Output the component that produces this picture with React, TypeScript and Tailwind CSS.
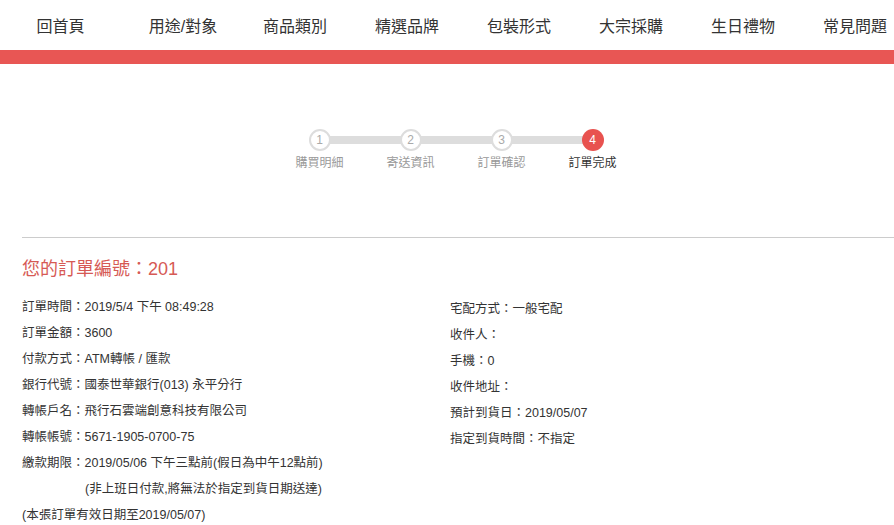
const navItems = ["用途/對象", "商品類別", "精選品牌", "包裝形式", "大宗採購", "生日禮物", "常見問題"];

const steps = ["購買明細", "寄送資訊", "訂單確認", "訂單完成"];

const leftRows: [string, string][] = [
  ["訂單時間：", "2019/5/4 下午 08:49:28"],
  ["訂單金額：", "3600"],
  ["付款方式：", "ATM轉帳 / 匯款"],
  ["銀行代號：", "國泰世華銀行(013) 永平分行"],
  ["轉帳戶名：", "飛行石雲端創意科技有限公司"],
  ["轉帳帳號：", "5671-1905-0700-75"],
  ["繳款期限：", "2019/05/06 下午三點前(假日為中午12點前)"],
];

const rightRows = ["宅配方式：一般宅配", "收件人：", "手機：0", "收件地址：", "預計到貨日：2019/05/07", "指定到貨時間：不指定"];

export default function App() {
  return (
    <div className="min-h-[525px] overflow-hidden bg-white text-[#333] [font-family:'Liberation_Sans','Noto_Sans_CJK_TC',sans-serif]">
      {/* top nav */}
      <nav className="flex h-[50px] items-center pt-[4px] text-[16px] whitespace-nowrap">
        <a className="w-[127px] shrink-0 pr-[6px] text-center">回首頁</a>
        {navItems.map((item) => (
          <a key={item} className="w-[112px] shrink-0 text-center">
            {item}
          </a>
        ))}
      </nav>
      <div className="h-[14px] bg-[#e85654]"></div>

      {/* steps */}
      <div className="flex justify-center pt-[65px] pl-[18px]">
        <div className="relative flex">
          <div className="absolute left-[45px] right-[45px] top-[7px] h-[8px] bg-[#dddddd]"></div>
          {steps.map((s, i) => (
            <div key={s} className="relative flex w-[91px] flex-col items-center">
              <div
                className={
                  i === 3
                    ? "flex h-[22px] w-[22px] items-center justify-center rounded-full bg-[#e8524f] text-[12px] text-white"
                    : "flex h-[22px] w-[22px] items-center justify-center rounded-full border-2 border-[#dddddd] bg-white text-[12px] text-[#aaa]"
                }
              >
                {i + 1}
              </div>
              <div className={i === 3 ? "mt-[3px] text-[12px] text-[#333]" : "mt-[3px] text-[12px] text-[#999]"}>{s}</div>
            </div>
          ))}
        </div>
      </div>

      {/* order info */}
      <div className="mt-[65px] ml-[22px] border-t border-[#cccccc]">
        <h2 className="mt-[18px] text-[18px] leading-[26px] text-[#d65a55]">您的訂單編號：201</h2>
        <div className="mt-[12px] flex text-[12.5px] leading-[26px] whitespace-nowrap">
          <div className="w-[428px]">
            {leftRows.map(([k, v]) => (
              <div key={k}>
                {k}
                {v}
              </div>
            ))}
            <div className="pl-[63px]">(非上班日付款,將無法於指定到貨日期送達)</div>
            <div>(本張訂單有效日期至2019/05/07)</div>
          </div>
          <div className="pt-[2px]">
            {rightRows.map((r) => (
              <div key={r}>{r}</div>
            ))}
          </div>
        </div>
      </div>
    </div>
  );
}
